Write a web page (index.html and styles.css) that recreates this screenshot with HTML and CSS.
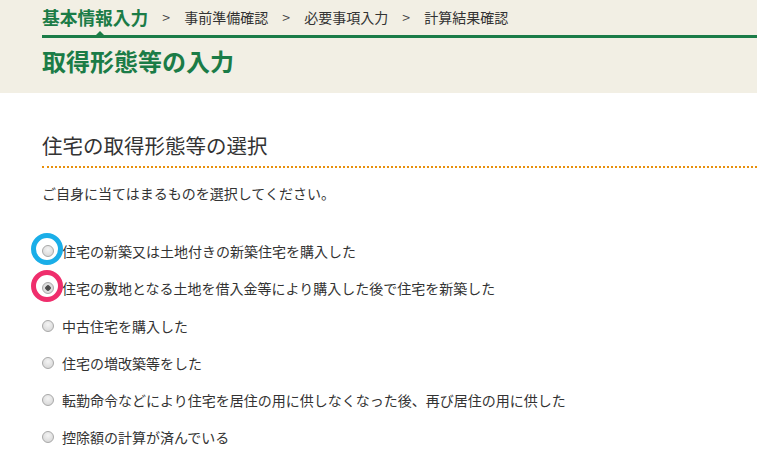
FILE: index.html
```html
<!DOCTYPE html>
<html lang="ja">
<head>
  <meta charset="UTF-8" />
  <meta name="viewport" content="width=device-width, initial-scale=1" />
  <title>取得形態等の入力</title>
  <link rel="stylesheet" href="styles.css">
</head>
<body>
  <header class="page-head">
    <ol class="steps">
      <li class="step current">基本情報入力</li>
      <li class="sep">&gt;</li>
      <li class="step">事前準備確認</li>
      <li class="sep">&gt;</li>
      <li class="step">必要事項入力</li>
      <li class="sep">&gt;</li>
      <li class="step">計算結果確認</li>
    </ol>
    <h1 class="page-title">取得形態等の入力</h1>
  </header>

  <main class="content">
    <h2 class="section-title">住宅の取得形態等の選択</h2>
    <p class="lead">ご自身に当てはまるものを選択してください。</p>

    <form class="choices">
      <label class="choice">
        <span class="radio-wrap"><input type="radio" name="kind" value="1"><span class="ring ring-blue"></span></span>
        <span class="choice-text">住宅の新築又は土地付きの新築住宅を購入した</span>
      </label>
      <label class="choice">
        <span class="radio-wrap"><input type="radio" name="kind" value="2" checked><span class="ring ring-pink"></span></span>
        <span class="choice-text">住宅の敷地となる土地を借入金等により購入した後で住宅を新築した</span>
      </label>
      <label class="choice">
        <span class="radio-wrap"><input type="radio" name="kind" value="3"></span>
        <span class="choice-text">中古住宅を購入した</span>
      </label>
      <label class="choice">
        <span class="radio-wrap"><input type="radio" name="kind" value="4"></span>
        <span class="choice-text">住宅の増改築等をした</span>
      </label>
      <label class="choice">
        <span class="radio-wrap"><input type="radio" name="kind" value="5"></span>
        <span class="choice-text">転勤命令などにより住宅を居住の用に供しなくなった後、再び居住の用に供した</span>
      </label>
      <label class="choice">
        <span class="radio-wrap"><input type="radio" name="kind" value="6"></span>
        <span class="choice-text">控除額の計算が済んでいる</span>
      </label>
    </form>
  </main>
</body>
</html>
```

FILE: styles.css
```css
body {
  margin: 0;
  font-family: "Noto Sans CJK JP", "Noto Sans", sans-serif;
  color: #333;
  background-color: #fff;
}
.page-head {
  background-color: #f2efe4;
  padding: 0 0 0 42px;
  height: 93px;
  box-sizing: border-box;
}
.steps {
  list-style: none;
  margin: 0;
  padding: 0;
  display: flex;
  align-items: center;
  height: 35px;
  border-bottom: 3px solid #1b7c47;
  font-size: 14px;
  color: #333;
}
.step {
  position: relative;
  line-height: 30px;
  margin-top: -2px;
}
.step.current {
  font-size: 17.7px;
  font-weight: bold;
  color: #1b7c47;
}
.step.current::after {
  content: "";
  position: absolute;
  left: 53px;
  bottom: -4px;
  border-left: 5px solid transparent;
  border-right: 5px solid transparent;
  border-bottom: 5px solid #1b7c47;
}
.sep {
  width: 36px;
  text-align: center;
  margin-top: -2px;
  font-size: 14px;
  color: #444;
}
.page-title {
  margin: 0;
  padding-top: 7px;
  font-size: 24px;
  line-height: 32px;
  color: #1b7c47;
  font-weight: bold;
}
.content {
  padding: 0 0 0 42px;
}
.section-title {
  margin: 38px 0 0 0;
  padding-bottom: 7px;
  font-size: 20.5px;
  line-height: 28px;
  font-weight: normal;
  color: #333;
  border-bottom: 2px dotted #e8900c;
}
.lead {
  margin: 14px 0 0 0;
  font-size: 14px;
  line-height: 22px;
}
.choices {
  margin-top: 36px;
  display: flex;
  flex-direction: column;
  gap: 15.3px;
}
.choice {
  display: flex;
  align-items: center;
  height: 22px;
  font-size: 14px;
}
.radio-wrap {
  position: relative;
  display: flex;
  align-items: center;
  justify-content: center;
  width: 12px;
  height: 12px;
  margin: 0 8px 0 0;
}
.choice input {
  appearance: none;
  -webkit-appearance: none;
  margin: 0;
  width: 12px;
  height: 12px;
  border-radius: 50%;
  border: 1px solid #a8a8a8;
  background: radial-gradient(circle at 50% 35%, #f4f4f4 0%, #dcdcdc 70%, #cfcfcf 100%);
  box-sizing: border-box;
}
.choice input:checked {
  background: radial-gradient(circle, #444 0, #555 2.5px, #e0e0e0 3px, #d6d6d6 100%);
}
.ring {
  position: absolute;
  left: -11px;
  top: -12px;
  width: 22px;
  height: 22px;
  border-radius: 50%;
  border: 5px solid #1aaee8;
}
.ring-pink {
  border-color: #ef2e6c;
}
```
